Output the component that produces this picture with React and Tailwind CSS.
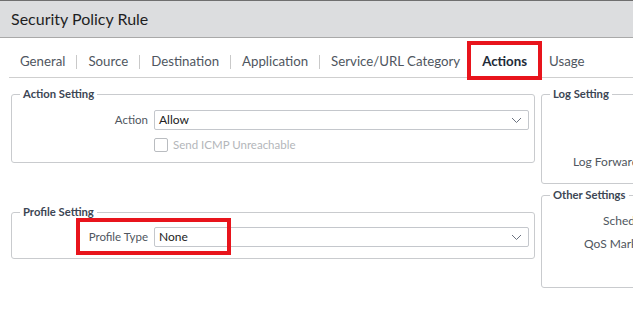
import React from "react";

const font = { fontFamily: "Lato, 'Open Sans', sans-serif" };

function Chevron() {
  return (
    <svg width="11" height="7" viewBox="0 0 11 7" className="shrink-0">
      <path d="M1 1 L5.5 5.5 L10 1" fill="none" stroke="#6b7280" strokeWidth="1" />
    </svg>
  );
}

function Select({ value }) {
  return (
    <div className="flex h-[20px] flex-1 items-center justify-between rounded-[2px] border border-[#c4c7cc] bg-white pl-[4px] pr-[6px]">
      <span className="text-[12px] text-[#222]">{value}</span>
      <Chevron />
    </div>
  );
}

function Tab({ label, sep = true, bold = false }) {
  return (
    <div className="flex items-center">
      <span className={`px-[11px] text-[13.25px] ${bold ? "font-bold text-[#222b38]" : "text-[#4f5660]"}`}>{label}</span>
      {sep && <span className="h-[14px] w-px bg-[#c9c9c9]" />}
    </div>
  );
}

function Legend({ children }) {
  return (
    <legend className="ml-[-2px] px-[3px] text-[11.25px] font-bold leading-[14px] text-[#3c4654]">{children}</legend>
  );
}

export default function App() {
  return (
    <div className="relative h-[328px] w-[633px] overflow-hidden bg-white" style={font}>
      <div className="flex h-[38px] items-center border-t border-b border-t-[#6f6f6f] border-b-[#a9a9a9] bg-[#dcdddf] pl-[11px]">
        <span className="text-[16px] text-[#1f1f1f]">Security Policy Rule</span>
      </div>
      <div className="ml-[9px] flex h-[40px] items-center border-b border-[#cfcfcf] pt-[9px]">
        <Tab label="General" />
        <Tab label="Source" />
        <Tab label="Destination" />
        <Tab label="Application" />
        <Tab label="Service/URL Category" sep={false} />
        <Tab label="Actions" sep={false} bold />
        <Tab label="Usage" sep={false} />
      </div>

      <div className="flex gap-[6px] pl-[11px] pt-[9px]">
        <div className="flex w-[524px] shrink-0 flex-col gap-[42px]">
          <fieldset className="h-[76px] rounded-[3px] border border-[#c9cbce] pl-[10px] pr-[5px]">
            <Legend>Action Setting</Legend>
            <div className="mt-[9px] flex items-center gap-[6px]">
              <span className="w-[126px] text-right text-[11.5px] text-[#4f5660]">Action</span>
              <Select value="Allow" />
            </div>
            <div className="mt-[6px] flex items-center gap-[5px] pl-[132px]">
              <span className="h-[14px] w-[14px] rounded-[2px] border border-[#b9bcc0] bg-white" />
              <span className="text-[11.5px] text-[#b3b6ba]">Send ICMP Unreachable</span>
            </div>
          </fieldset>
          <fieldset className="h-[54px] rounded-[3px] border border-[#c9cbce] pl-[10px] pr-[5px]">
            <Legend>Profile Setting</Legend>
            <div className="mt-[8px] flex items-center gap-[6px]">
              <span className="w-[126px] text-right text-[11.5px] text-[#4f5660]">Profile Type</span>
              <Select value="None" />
            </div>
          </fieldset>
        </div>
        <div className="flex w-[140px] shrink-0 flex-col gap-[4px]">
          <fieldset className="h-[97px] rounded-[3px] border border-[#c9cbce] px-[10px]">
            <Legend>Log Setting</Legend>
            <div className="mt-[52px] whitespace-nowrap pl-[21px] text-[12px] text-[#4f5660]">Log Forwarding</div>
          </fieldset>
          <fieldset className="h-[100px] rounded-[3px] border border-[#c9cbce] px-[10px]">
            <Legend>Other Settings</Legend>
            <div className="mt-[10px] whitespace-nowrap pl-[51px] text-[12px] text-[#4f5660]">Schedule</div>
            <div className="mt-[5px] whitespace-nowrap pl-[32px] text-[12px] text-[#4f5660]">QoS Marking</div>
          </fieldset>
        </div>
      </div>

      <div className="pointer-events-none absolute left-[467px] top-[41px] h-[39px] w-[75px] border-[4px] border-[#e8141c]" />
      <div className="pointer-events-none absolute left-[76px] top-[218px] h-[37px] w-[155px] border-[4px] border-[#e8141c]" />
    </div>
  );
}
